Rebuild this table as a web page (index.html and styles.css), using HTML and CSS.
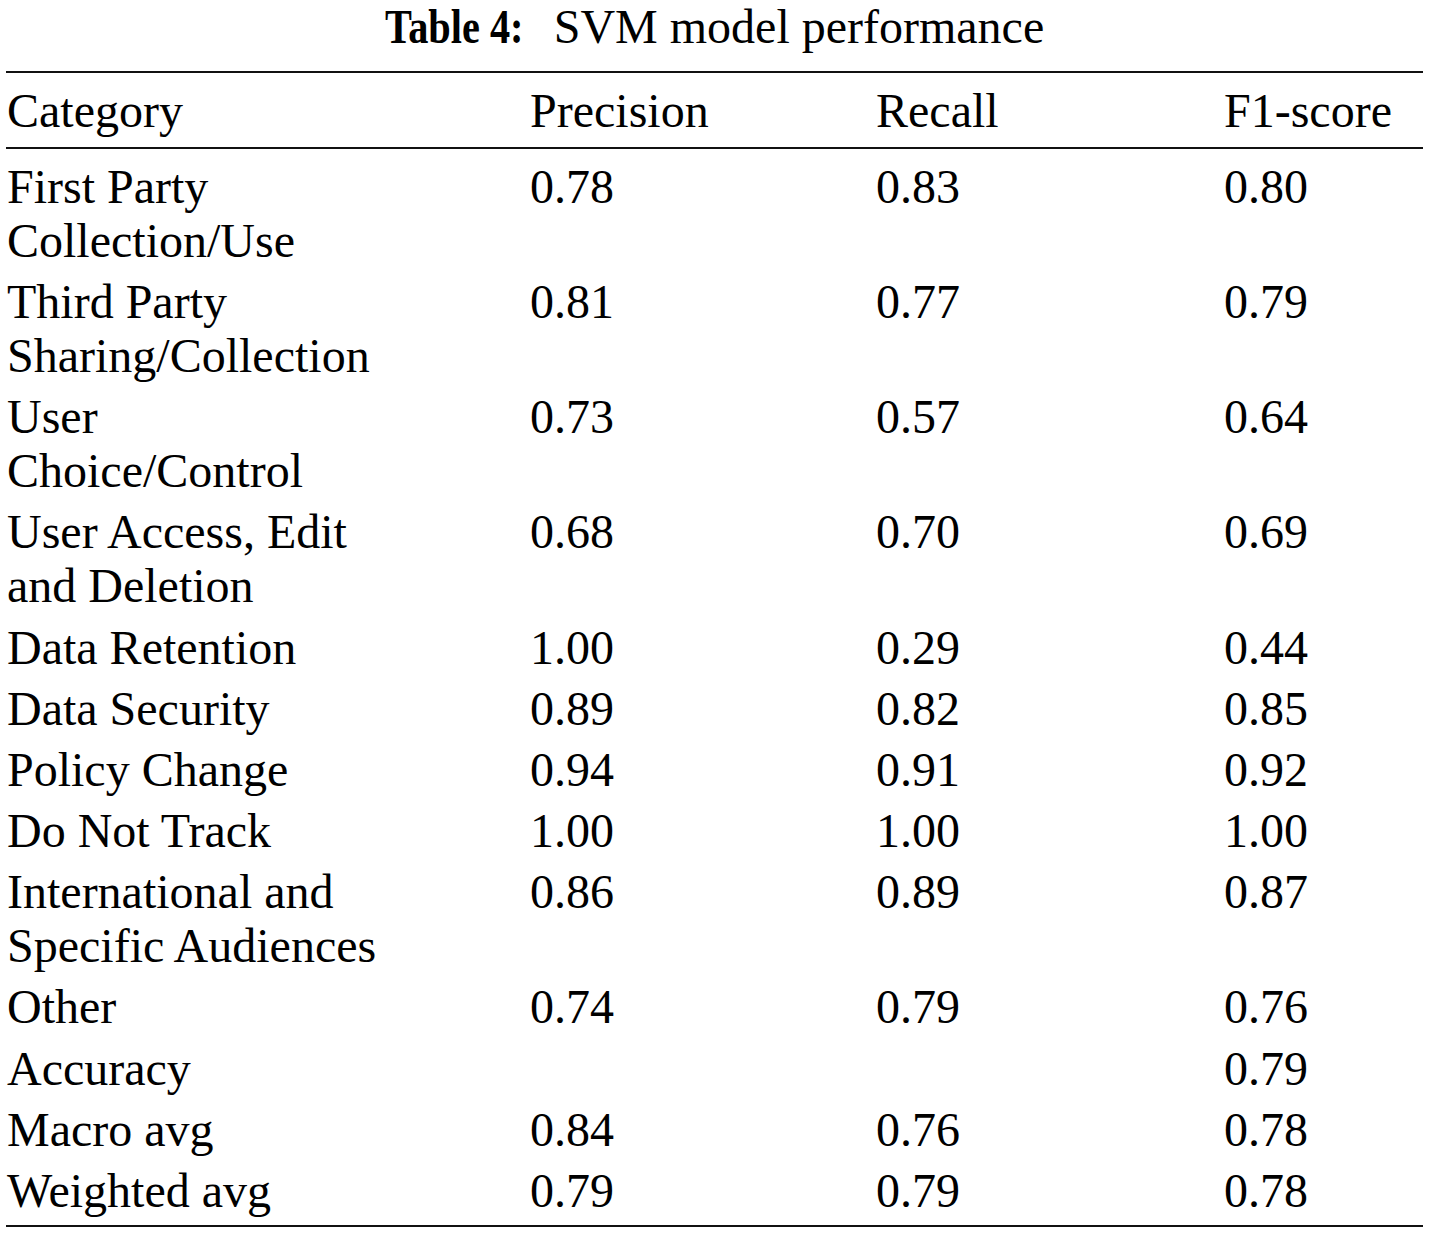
FILE: index.html
```html
<!DOCTYPE html>
<html lang="en">
<head>
<meta charset="utf-8">
<title>Table 4: SVM model performance</title>
<link rel="stylesheet" href="styles.css">
</head>
<body>
<div class="caption"><span class="caption-label">Table 4:</span><span class="caption-text">SVM model performance</span></div>
<table class="results">
  <colgroup>
    <col class="c-cat">
    <col class="c-prec">
    <col class="c-rec">
    <col class="c-f1">
  </colgroup>
  <thead>
    <tr><th>Category</th><th>Precision</th><th>Recall</th><th>F1-score</th></tr>
  </thead>
  <tbody>
    <tr><td>First Party<br>Collection/Use</td><td>0.78</td><td>0.83</td><td>0.80</td></tr>
    <tr><td>Third Party<br>Sharing/Collection</td><td>0.81</td><td>0.77</td><td>0.79</td></tr>
    <tr><td>User<br>Choice/Control</td><td>0.73</td><td>0.57</td><td>0.64</td></tr>
    <tr><td>User Access, Edit<br>and Deletion</td><td>0.68</td><td>0.70</td><td>0.69</td></tr>
    <tr><td>Data Retention</td><td>1.00</td><td>0.29</td><td>0.44</td></tr>
    <tr><td>Data Security</td><td>0.89</td><td>0.82</td><td>0.85</td></tr>
    <tr><td>Policy Change</td><td>0.94</td><td>0.91</td><td>0.92</td></tr>
    <tr><td>Do Not Track</td><td>1.00</td><td>1.00</td><td>1.00</td></tr>
    <tr><td>International and<br>Specific Audiences</td><td>0.86</td><td>0.89</td><td>0.87</td></tr>
    <tr><td>Other</td><td>0.74</td><td>0.79</td><td>0.76</td></tr>
    <tr><td>Accuracy</td><td></td><td></td><td>0.79</td></tr>
    <tr><td>Macro avg</td><td>0.84</td><td>0.76</td><td>0.78</td></tr>
    <tr><td>Weighted avg</td><td>0.79</td><td>0.79</td><td>0.78</td></tr>
  </tbody>
</table>
</body>
</html>
```

FILE: styles.css
```css
html, body {
  margin: 0;
  padding: 0;
  background: #ffffff;
}

body {
  font-family: "Liberation Serif", "Times New Roman", serif;
  color: #000000;
}

.caption {
  display: flex;
  justify-content: center;
  font-family: "Liberation Serif", "Times New Roman", serif;
  font-size: 48px;
  line-height: 53px;
  height: 53px;
  margin-bottom: 18px;
  white-space: nowrap;
}

.caption-label {
  display: inline-block;
  font-weight: bold;
  transform: scaleX(0.84);
  transform-origin: left center;
  margin-right: 4px;
}

.results {
  margin-left: 6px;
  width: 1417px;
  table-layout: fixed;
  border-collapse: separate;
  border-spacing: 0;
  font-family: "Liberation Serif", "Times New Roman", serif;
  font-size: 48px;
  line-height: 54px;
  color: #000000;
}

.c-cat { width: 524px; }
.c-prec { width: 346px; }
.c-rec { width: 348px; }
.c-f1 { width: 199px; }

.results th,
.results td {
  text-align: left;
  vertical-align: top;
  font-weight: normal;
  padding: 3.6px 0 3.6px 0;
  white-space: nowrap;
}

.results th:first-child,
.results td:first-child {
  padding-left: 1px;
}

.results th {
  border-top: 2px solid #111;
  border-bottom: 2px solid #111;
  padding-top: 11px;
  padding-bottom: 9px;
}

.results tbody tr:first-child td {
  padding-top: 10.8px;
}

.results tbody tr:last-child td {
  padding-bottom: 7.2px;
  border-bottom: 2px solid #111;
}
```
